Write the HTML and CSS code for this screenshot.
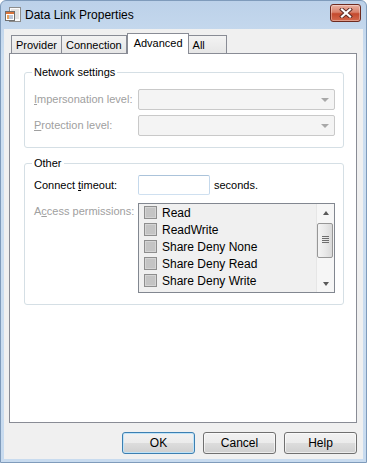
FILE: index.html
```html
<!DOCTYPE html>
<html lang="en">
<head>
    <meta charset="UTF-8">
    <title>Data Link Properties</title>
    <link rel="stylesheet" href="styles.css">
</head>
<body>
    <div class="window">
        <div class="titlebar">
            <svg class="app-icon" width="16" height="16" viewBox="0 0 16 16">
                <rect x="4.5" y="0.5" width="11" height="14" fill="#fbfbfb" stroke="#8c8c8c"/>
                <path d="M6 3h8M6 5h8M6 7h8M6 9h8M6 11h8" stroke="#c9c9c9"/>
                <rect x="0.5" y="4.5" width="9" height="9" fill="#ffffff" stroke="#6f6f6f"/>
                <rect x="1" y="5" width="8" height="2" fill="#d9733a"/>
                <path d="M2 9h6M2 11h6" stroke="#7b8fb0"/>
                <rect x="2" y="8" width="2" height="4" fill="#e9a25c"/>
            </svg>
            <span class="title">Data Link Properties</span>
            <button class="close-btn">
                <svg width="14" height="10" viewBox="0 0 14 10">
                    <path d="M3 1.5l8 7M11 1.5l-8 7" stroke="#5b2a24" stroke-width="4" stroke-linecap="square"/>
                    <path d="M3 1.5l8 7M11 1.5l-8 7" stroke="#ffffff" stroke-width="2.2" stroke-linecap="square"/>
                </svg>
            </button>
        </div>

        <div class="client">
            <div class="tabs">
                <div class="tab">Provider</div>
                <div class="tab">Connection</div>
                <div class="tab active">Advanced</div>
                <div class="tab tab-all">All</div>
            </div>

            <div class="panel">
                <!-- Network settings -->
                <fieldset class="group group-network">
                    <legend>Network settings</legend>
                    <div class="row">
                        <label class="disabled"><u>I</u>mpersonation level:</label>
                        <div class="combo"></div>
                    </div>
                    <div class="row">
                        <label class="disabled"><u>P</u>rotection level:</label>
                        <div class="combo"></div>
                    </div>
                </fieldset>

                <!-- Other -->
                <fieldset class="group group-other">
                    <legend>Other</legend>
                    <div class="row">
                        <label>Connect <u>t</u>imeout:</label>
                        <input type="text" class="textbox">
                        <span class="suffix">seconds.</span>
                    </div>
                    <div class="row row-top">
                        <label class="disabled">A<u>c</u>cess permissions:</label>
                        <div class="listbox">
                            <ul class="items">
                                <li><span class="check"></span>Read</li>
                                <li><span class="check"></span>ReadWrite</li>
                                <li><span class="check"></span>Share Deny None</li>
                                <li><span class="check"></span>Share Deny Read</li>
                                <li><span class="check"></span>Share Deny Write</li>
                            </ul>
                            <div class="scrollbar">
                                <div class="arrow arrow-up"></div>
                                <div class="track"><div class="thumb"></div></div>
                                <div class="arrow arrow-down"></div>
                            </div>
                        </div>
                    </div>
                </fieldset>
            </div>

            <div class="buttons">
                <button class="btn btn-default">OK</button>
                <button class="btn">Cancel</button>
                <button class="btn">Help</button>
            </div>
        </div>
    </div>
</body>
</html>
```

FILE: styles.css
```css
body {
    margin: 0;
    padding: 0;
    font-family: 'Liberation Sans', Arial, sans-serif;
    font-size: 11px;
    color: #000;
}
.window {
    width: 367px;
    height: 463px;
    box-sizing: border-box;
    border: 1px solid #7f9bbb;
    border-radius: 6px 6px 0 0;
    padding: 0 3px 3px;
    background: linear-gradient(#bcd1e9, #cddff1 60px, #c8dbef);
    display: flex;
    flex-direction: column;
}
.titlebar {
    height: 27px;
    display: flex;
    align-items: center;
    padding: 0 2px 1px 1px;
}
.app-icon {
    margin-right: 4px;
}
.title {
    font-size: 12px;
    flex: 1;
}
.close-btn {
    width: 31px;
    height: 18px;
    margin-top: -3px;
    padding: 0;
    border: 1px solid #6e2b20;
    border-radius: 3px;
    background: linear-gradient(#eab1a2, #d9826c 45%, #c4492d 55%, #d36a4e);
    box-shadow: inset 0 0 0 1px rgba(255, 255, 255, 0.35);
    display: flex;
    align-items: center;
    justify-content: center;
}
.client {
    flex: 1;
    background-color: #f0f0f0;
    padding: 4px 6px 0 5px;
    display: flex;
    flex-direction: column;
}
.tabs {
    display: flex;
    align-items: flex-end;
    padding-left: 2px;
    margin-bottom: -1px;
    position: relative;
    z-index: 1;
}
.tab {
    height: 19px;
    box-sizing: border-box;
    padding: 3px 4px 0 4px;
    border: 1px solid #898c95;
    border-left: none;
    background: linear-gradient(#f3f3f3, #e6e6e6);
}
.tab:first-child {
    border-left: 1px solid #898c95;
}
.tab.active {
    height: 21px;
    padding: 3px 5px 0 6px;
    border-left: 1px solid #898c95;
    border-bottom: none;
    background: #fff;
}
.tab-all {
    width: 38px;
}
.panel {
    height: 370px;
    box-sizing: border-box;
    border: 1px solid #898c95;
    background: #fff;
}
.group {
    margin: 0 12px 0 14px;
    border: 1px solid #d5dfe5;
    border-radius: 3px;
    padding: 0 7px 11px 9px;
}
.group legend {
    padding: 0 2px;
    margin-left: -2px;
    line-height: 13px;
}
.group-network {
    margin-top: 12px;
    padding-top: 10px;
}
.group-other {
    margin-top: 9px;
    padding-top: 5px;
}
.row {
    display: flex;
    align-items: center;
}
.row + .row {
    margin-top: 5px;
}
.group-other .row + .row {
    margin-top: 8px;
}
.row-top {
    align-items: flex-start;
}
.row-top label {
    margin-top: 2px;
}
.row label {
    width: 104px;
    flex: none;
    line-height: 13px;
}
.disabled {
    color: #a0a0a0;
}
.combo {
    width: 197px;
    height: 21px;
    box-sizing: border-box;
    border: 1px solid #c9c9c9;
    border-radius: 2px;
    background: #f4f4f4;
    position: relative;
}
.combo::after {
    content: "";
    position: absolute;
    right: 5px;
    top: 8px;
    border-style: solid;
    border-width: 4px 4px 0;
    border-color: #a8a8a8 transparent transparent;
}
.textbox {
    width: 72px;
    height: 20px;
    box-sizing: border-box;
    margin: 0;
    padding: 0 2px;
    border: 1px solid;
    border-color: #abc3da #c5d9ec #cfe0f0 #c5d9ec;
    border-radius: 2px;
    font: inherit;
}
.suffix {
    margin-left: 4px;
}
.listbox {
    width: 197px;
    height: 90px;
    box-sizing: border-box;
    border: 1px solid #828790;
    background: #f0f0f0;
    display: flex;
}
.items {
    flex: 1;
    list-style: none;
    margin: 0;
    padding: 0 0 0 5px;
}
.items li {
    height: 17px;
    display: flex;
    align-items: center;
    font-size: 12px;
}
.check {
    width: 13px;
    height: 13px;
    box-sizing: border-box;
    border: 1px solid #8e8e8e;
    background: #c4c4c4;
    box-shadow: inset 0 0 0 1px #d4d4d4;
    margin-right: 5px;
}
.scrollbar {
    width: 17px;
    border-left: 1px solid #e6e6e6;
    background: #f6f6f6;
    display: flex;
    flex-direction: column;
}
.arrow {
    height: 17px;
    display: flex;
    align-items: center;
    justify-content: center;
}
.arrow::after {
    content: "";
    border-style: solid;
    border-color: transparent;
}
.arrow-up::after {
    border-width: 0 3.5px 4px;
    border-bottom-color: #5a5a5a;
}
.arrow-down::after {
    border-width: 4px 3.5px 0;
    border-top-color: #5a5a5a;
}
.track {
    flex: 1;
    padding: 2px 1px 0 0;
}
.thumb {
    height: 35px;
    box-sizing: border-box;
    border: 1px solid #979797;
    border-radius: 2px;
    background: linear-gradient(90deg, #f4f4f4, #e9e9e9 50%, #d9d9d9);
    position: relative;
}
.thumb::after {
    content: "";
    position: absolute;
    left: 4px;
    top: 12px;
    width: 7px;
    height: 1px;
    background: #6d6d6d;
    box-shadow: 0 2px #6d6d6d, 0 4px #6d6d6d, 0 6px #6d6d6d;
}
.buttons {
    display: flex;
    justify-content: flex-end;
    gap: 8px;
    margin-top: 9px;
}
.btn {
    width: 73px;
    height: 22px;
    padding: 0;
    border: 1px solid #707070;
    border-radius: 3px;
    background: linear-gradient(#f2f2f2, #ebebeb 50%, #dddddd 50%, #cfcfcf);
    box-shadow: inset 0 0 0 1px rgba(255, 255, 255, 0.6);
    font: inherit;
    font-size: 12px;
    color: #000;
}
.btn-default {
    border-color: #3c7fb1;
    box-shadow: inset 0 0 0 1px #bfe3f8;
}
```
